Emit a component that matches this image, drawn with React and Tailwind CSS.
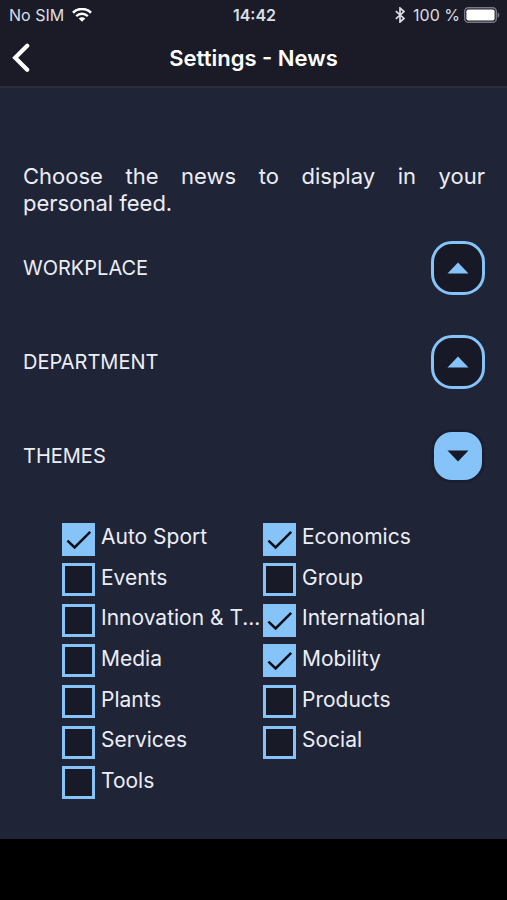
import { useState } from 'react'

const THEMES = [
  { label: 'Auto Sport', checked: true },
  { label: 'Economics', checked: true },
  { label: 'Events', checked: false },
  { label: 'Group', checked: false },
  { label: 'Innovation & T...', checked: false },
  { label: 'International', checked: true },
  { label: 'Media', checked: false },
  { label: 'Mobility', checked: true },
  { label: 'Plants', checked: false },
  { label: 'Products', checked: false },
  { label: 'Services', checked: false },
  { label: 'Social', checked: false },
  { label: 'Tools', checked: false },
]

function WifiIcon() {
  return (
    <svg viewBox="0 0 20 14" aria-hidden="true" className="h-[14px] w-[20px]" fill="none" stroke="currentColor">
      <path d="M1 4.7C6 -.2 14 -.2 19 4.7" strokeWidth="2.6" />
      <path d="M4.2 8.1C7.5 5 12.5 5 15.8 8.1" strokeWidth="2.4" />
      <path d="M10 13.8 6.7 10.5C8.6 8.9 11.4 8.9 13.3 10.5Z" fill="currentColor" stroke="none" />
    </svg>
  )
}

function BluetoothIcon() {
  return (
    <svg viewBox="0 0 10 16" aria-hidden="true" className="h-4 w-[10px]" fill="none" stroke="currentColor">
      <path d="M.8 4.2 9 11.4 5 15V1l4 3.6L.8 11.8" strokeWidth="1.7" strokeLinejoin="miter" />
    </svg>
  )
}

function BatteryIcon() {
  return (
    <svg viewBox="0 0 36 16" aria-hidden="true" className="h-4 w-9">
      <rect x=".7" y=".7" width="31.6" height="14.6" rx="3.6" fill="none" stroke="#767984" strokeWidth="1.4" />
      <rect x="2.4" y="2.4" width="28.2" height="11.2" rx="1.8" fill="#fff" />
      <path d="M33.6 5.2C35.8 6 35.8 10 33.6 10.8Z" fill="#767984" />
    </svg>
  )
}

function StatusBar() {
  return (
    <div className="grid h-[30px] grid-cols-[1fr_auto_1fr] items-center pl-[9px] pr-[7px] text-base text-[#dcdee6]">
      <div className="flex items-center gap-2">
        <span>No SIM</span>
        <span className="text-white">
          <WifiIcon />
        </span>
      </div>
      <span className="font-semibold">14:42</span>
      <div className="flex items-center justify-end gap-1">
        <BluetoothIcon />
        <span className="ml-1">100 %</span>
        <BatteryIcon />
      </div>
    </div>
  )
}

function Section({ title, open, onToggle, children }) {
  return (
    <section>
      <div className="flex items-center justify-between">
        <h2 className="text-xl">{title}</h2>
        <button
          type="button"
          aria-label={title}
          aria-expanded={open}
          onClick={onToggle}
          className={`flex h-[54px] w-[54px] items-center justify-center rounded-[21px] border-3 ${
            open ? 'border-[#1c1f2f] bg-[#86c3f9] text-[#171926]' : 'border-[#86c3f9] bg-[#171926] text-[#86c3f9]'
          }`}
        >
          <svg viewBox="0 0 22 12" aria-hidden="true" className="h-3 w-[22px]" fill="currentColor">
            <path d={open ? 'M.5.5h21L11 11.5z' : 'M.5 11.5h21L11 .5z'} />
          </svg>
        </button>
      </div>
      {open ? children : null}
    </section>
  )
}

function ThemeOption({ label, checked, onChange }) {
  return (
    <label className="flex min-w-0 items-center gap-[6px]">
      <span className="grid shrink-0">
        <input
          type="checkbox"
          checked={checked}
          onChange={onChange}
          className="col-start-1 row-start-1 h-[33px] w-[33px] appearance-none border-3 border-[#86c3f9] bg-[#181a27] checked:bg-[#86c3f9]"
        />
        {checked ? (
          <svg
            viewBox="0 0 33 33"
            aria-hidden="true"
            className="pointer-events-none col-start-1 row-start-1 h-[33px] w-[33px]"
            fill="none"
            stroke="#0d1018"
            strokeWidth="2.5"
          >
            <path d="M5.4 17.6 12.6 24.4 28.2 8.8" />
          </svg>
        ) : null}
      </span>
      <span className="whitespace-nowrap pb-1">{label}</span>
    </label>
  )
}

export default function App() {
  const [openSections, setOpenSections] = useState({ workplace: false, department: false, themes: true })
  const [themes, setThemes] = useState(THEMES)

  const toggleSection = (key) => setOpenSections((prev) => ({ ...prev, [key]: !prev[key] }))
  const toggleTheme = (index) =>
    setThemes((prev) => prev.map((theme, i) => (i === index ? { ...theme, checked: !theme.checked } : theme)))

  return (
    <div className="flex min-h-screen flex-col bg-black pb-[61px] font-[Inter,sans-serif] text-[#eceef6]">
      <header className="border-b-2 border-[#2b2d3a] bg-[#1a1b27]">
        <StatusBar />
        <div className="grid h-[56px] grid-cols-[1fr_auto_1fr] items-center px-3">
          <button type="button" aria-label="Back" className="w-5 text-white">
            <svg viewBox="0 0 20 30" className="h-[30px] w-5" fill="none" stroke="currentColor" aria-hidden="true">
              <path d="M15.2 2.7 3.2 14.7 15.2 26.7" strokeWidth="4.2" strokeLinecap="round" strokeLinejoin="miter" />
            </svg>
          </button>
          <h1 className="text-[22px] font-semibold text-white">Settings - News</h1>
        </div>
      </header>

      <main className="flex-1 bg-[#202437] pb-8 pl-[23px] pr-[22px] pt-[75px]">
        <p className="text-[22px] leading-[27px]">
          <span className="block [text-align-last:justify]">Choose the news to display in your </span>
          personal feed.
        </p>

        <div className="mt-6 flex flex-col gap-10">
          <Section title="WORKPLACE" open={openSections.workplace} onToggle={() => toggleSection('workplace')} />
          <Section title="DEPARTMENT" open={openSections.department} onToggle={() => toggleSection('department')} />
          <Section title="THEMES" open={openSections.themes} onToggle={() => toggleSection('themes')}>
            <div className="mt-9 grid min-h-[284px] auto-rows-fr grid-cols-2 pl-[39px] pr-[21px] text-[21px] leading-[30px]">
              {themes.map((theme, index) => (
                <ThemeOption
                  key={theme.label}
                  label={theme.label}
                  checked={theme.checked}
                  onChange={() => toggleTheme(index)}
                />
              ))}
            </div>
          </Section>
        </div>
      </main>
    </div>
  )
}
